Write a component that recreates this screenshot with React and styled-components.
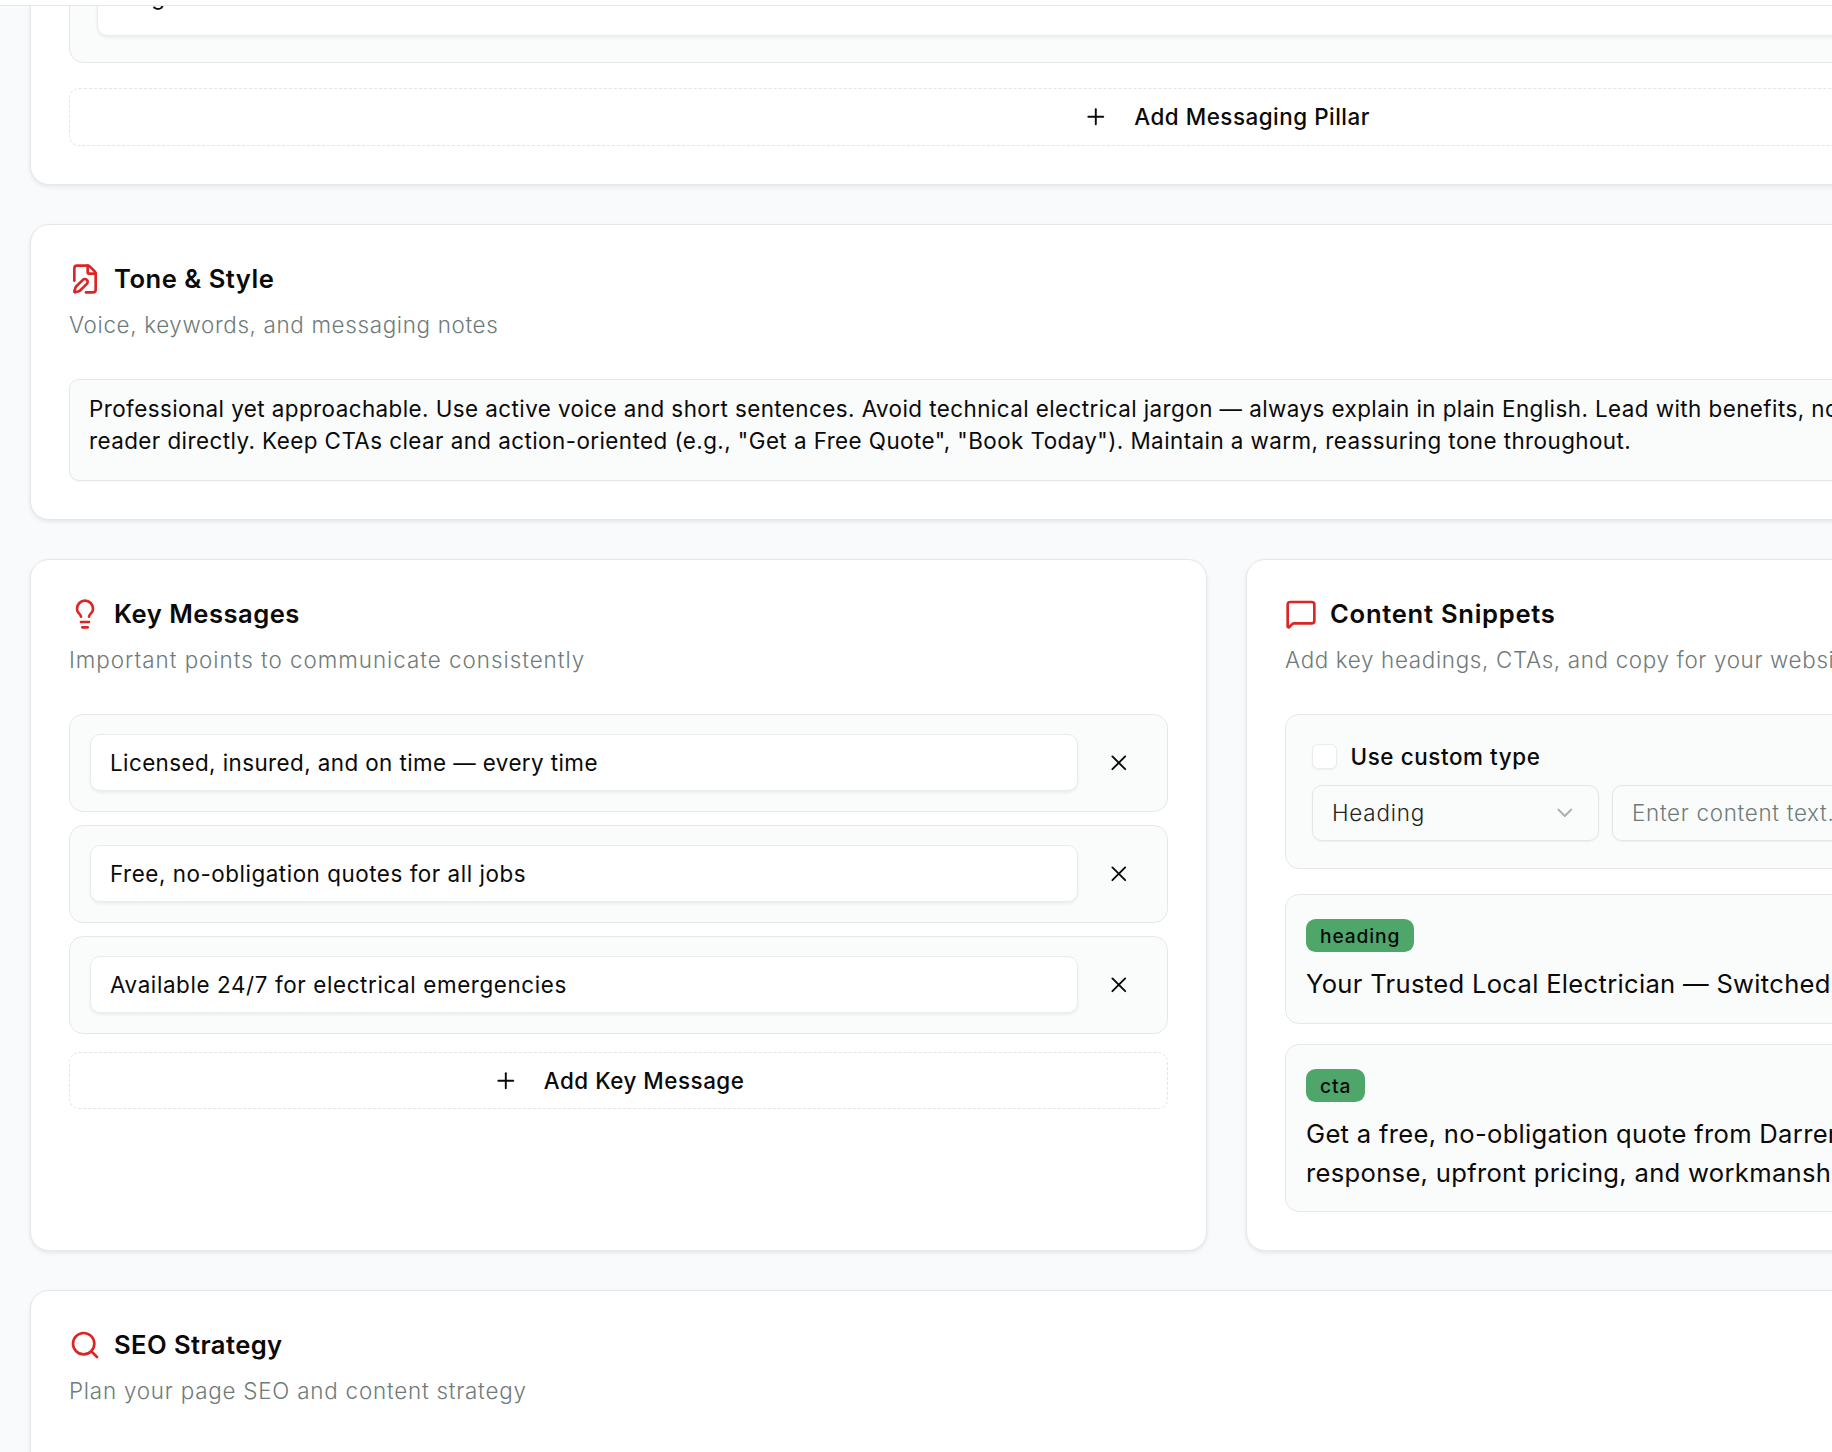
import React from 'react'
import styled, { createGlobalStyle } from 'styled-components'
import { FilePen, Lightbulb, MessageSquare, Search, Plus, X, ChevronDown } from 'lucide-react'

const Global = createGlobalStyle`
  html, body { margin: 0; padding: 0; }
  body { background: #f9fafb; font-family: Inter, "Noto Sans", sans-serif; color: #0a0a0a; }
`

const Page = styled.div`
  width: 1832px;
  height: 1452px;
  overflow: hidden;
  display: flex;
  flex-direction: column;
`
const TopBar = styled.div`
  flex: none;
  height: 5px;
  background: #fff;
  border-bottom: 1px solid #e5e7eb;
  position: relative;
  z-index: 2;
`
const Scroller = styled.div`
  width: 2393px;
  margin: -107px 0 0 30px;
  display: flex;
  flex-direction: column;
  gap: 39px;
`
const Card = styled.section`
  box-sizing: border-box;
  background: #fff;
  border: 1px solid #e5e7eb;
  border-radius: 19px;
  padding: 38px;
  box-shadow: 0 2px 4px rgba(0, 0, 0, 0.08);
`
const TwoCol = styled.div`
  display: grid;
  grid-template-columns: 1177px 1177px;
  gap: 39px;
`
const HeaderRow = styled.div`
  display: flex;
  align-items: center;
  gap: 13px;
  height: 32px;
  color: #dc2626;
`
const Title = styled.h2`
  margin: 0;
  font-size: 25.6px;
  font-weight: 600;
  line-height: 32px;
  letter-spacing: ${props => props.$ls}px;
  color: #0a0a0a;
`
const Sub = styled.p`
  margin: 14px 0 38px;
  font-size: 22.4px;
  line-height: 32px;
  font-weight: 300;
  letter-spacing: ${props => props.$ls}px;
  color: #6f7b79;
  white-space: nowrap;
`
const List = styled.div`
  display: flex;
  flex-direction: column;
  gap: 13px;
`
const Row = styled.div`
  box-sizing: border-box;
  height: 98px;
  display: flex;
  align-items: center;
  gap: 12px;
  padding: 0 19px 0 20px;
  background: #fafbfb;
  border: 1px solid #e5e7eb;
  border-radius: 14px;
`
const Field = styled.div`
  box-sizing: border-box;
  flex: 1;
  height: 57.6px;
  display: flex;
  align-items: center;
  padding: 0 19px;
  background: #fff;
  border: 1px solid #e9ebee;
  border-radius: 10px;
  box-shadow: 0 2px 3px rgba(0, 0, 0, 0.06);
  font-size: 22.4px;
  letter-spacing: ${props => props.$ls}px;
  white-space: nowrap;
`
const CloseButton = styled.button`
  flex: none;
  width: 57.6px;
  height: 57.6px;
  padding: 0;
  display: flex;
  align-items: center;
  justify-content: center;
  background: none;
  border: 0;
  color: #0a0a0a;
`
const AddButton = styled.button`
  box-sizing: border-box;
  width: 100%;
  height: 57.6px;
  margin-top: ${props => props.$top}px;
  display: flex;
  align-items: center;
  justify-content: center;
  gap: 25.6px;
  background: #fff;
  border: 1px dashed #e1e4e8;
  border-radius: 10px;
  font-family: inherit;
  font-size: 22.4px;
  font-weight: 500;
  letter-spacing: 0.52px;
  color: #0a0a0a;
`
const OldPillar = styled.div`
  box-sizing: border-box;
  padding: 27px 27px 26px;
  background: #fafbfb;
  border: 1px solid #e5e7eb;
  border-radius: 14px;
`
const PillarText = styled.div`
  box-sizing: border-box;
  height: 70px;
  padding: 14px 19px 0;
  background: #fff;
  border: 1px solid #e9ebee;
  border-radius: 10px;
  box-shadow: 0 2px 3px rgba(0, 0, 0, 0.06);
  font-size: 22.4px;
  letter-spacing: 0.42px;
  line-height: 32px;
`
const NotesBox = styled.div`
  box-sizing: border-box;
  height: 102px;
  padding: 13px 19px;
  background: #fafbfb;
  border: 1px solid #e5e7eb;
  border-radius: 10px;
  box-shadow: 0 1px 2px rgba(0, 0, 0, 0.04);
  font-size: 22.4px;
  letter-spacing: 0.44px;
  line-height: 32px;
  white-space: nowrap;
`
const CustomBox = styled.div`
  box-sizing: border-box;
  height: 155.5px;
  padding: 28px 26px 0;
  margin-bottom: 25px;
  background: #fafbfb;
  border: 1px solid #e5e7eb;
  border-radius: 14px;
`
const CheckRow = styled.label`
  display: flex;
  align-items: center;
  gap: 13.5px;
  font-size: 22.4px;
  font-weight: 500;
  letter-spacing: 0.6px;
`
const Check = styled.span`
  box-sizing: border-box;
  width: 25px;
  height: 25px;
  background: #fff;
  border: 1px solid #e9ebee;
  border-radius: 6px;
  box-shadow: 0 1px 2px rgba(0, 0, 0, 0.05);
`
const Controls = styled.div`
  display: flex;
  gap: 13px;
  margin-top: 15px;
`
const SelectBox = styled.div`
  box-sizing: border-box;
  width: 287px;
  height: 56px;
  display: flex;
  align-items: center;
  justify-content: space-between;
  padding: 0 20px 0 19px;
  border: 1px solid #e3e5e8;
  border-radius: 10px;
  box-shadow: 0 1px 2px rgba(0, 0, 0, 0.05);
  font-size: 22.4px;
  font-weight: 300;
  letter-spacing: 0.8px;
  color: #222;
  svg { color: #a8acae; }
`
const TextInput = styled(SelectBox)`
  flex: 1;
  letter-spacing: 0.7px;
  color: #6f7b79;
`
const Snippet = styled.div`
  box-sizing: border-box;
  padding: 24px 20px 19px;
  background: #fafbfb;
  border: 1px solid #e5e7eb;
  border-radius: 14px;
  & + & { margin-top: 20px; }
`
const Badge = styled.span`
  display: inline-flex;
  align-items: center;
  height: 33.4px;
  padding: 0 14px;
  background: #4fa66b;
  border-radius: 9.6px;
  font-size: 19.2px;
  font-weight: 500;
  letter-spacing: 0.9px;
  color: #0a0a0a;
`
const SnippetText = styled.div`
  margin-top: 13px;
  font-size: 25.6px;
  letter-spacing: 0.3px;
  line-height: 38.4px;
  white-space: nowrap;
`

const icon = { size: 32, strokeWidth: 2 }

const Heading = ({ Icon, children, ls = 0.5 }) => (
  <HeaderRow>
    <Icon {...icon} />
    <Title $ls={ls}>{children}</Title>
  </HeaderRow>
)

const messages = [
  { text: 'Licensed, insured, and on time — every time', ls: 0.42 },
  { text: 'Free, no-obligation quotes for all jobs', ls: 0.54 },
  { text: 'Available 24/7 for electrical emergencies', ls: 0.62 },
]

export default function App() {
  return (
    <Page>
      <Global />
      <TopBar />
      <Scroller>
        <Card>
          <OldPillar>
            <PillarText>Ring</PillarText>
          </OldPillar>
          <AddButton $top={25}>
            <Plus size={25.6} strokeWidth={1.8} />
            Add Messaging Pillar
          </AddButton>
        </Card>

        <Card>
          <Heading Icon={FilePen}>Tone &amp; Style</Heading>
          <Sub $ls={0.66}>Voice, keywords, and messaging notes</Sub>
          <NotesBox>
            Professional yet approachable. Use active voice and short sentences. Avoid technical electrical jargon — always explain in plain English. Lead with benefits, not features, and speak to the
            <br />
            reader directly. Keep CTAs clear and action-oriented (e.g., "Get a Free Quote", "Book Today"). Maintain a warm, reassuring tone throughout.
          </NotesBox>
        </Card>

        <TwoCol>
          <Card>
            <Heading Icon={Lightbulb}>Key Messages</Heading>
            <Sub $ls={0.98}>Important points to communicate consistently</Sub>
            <List>
              {messages.map(m => (
                <Row key={m.text}>
                  <Field $ls={m.ls}>{m.text}</Field>
                  <CloseButton><X size={25.6} strokeWidth={1.8} /></CloseButton>
                </Row>
              ))}
            </List>
            <AddButton $top={18}>
              <Plus size={25.6} strokeWidth={1.8} />
              Add Key Message
            </AddButton>
          </Card>

          <Card>
            <Heading Icon={MessageSquare} ls={0.72}>Content Snippets</Heading>
            <Sub $ls={0.66}>Add key headings, CTAs, and copy for your website</Sub>
            <CustomBox>
              <CheckRow><Check />Use custom type</CheckRow>
              <Controls>
                <SelectBox>Heading<ChevronDown size={25.6} strokeWidth={1.8} /></SelectBox>
                <TextInput>Enter content text...</TextInput>
              </Controls>
            </CustomBox>
            <Snippet>
              <Badge>heading</Badge>
              <SnippetText>Your Trusted Local Electrician — Switched On for Every Job</SnippetText>
            </Snippet>
            <Snippet>
              <Badge>cta</Badge>
              <SnippetText>
                Get a free, no-obligation quote from Darren today
                <br />
                response, upfront pricing, and workmanship you can trust
              </SnippetText>
            </Snippet>
          </Card>
        </TwoCol>

        <Card>
          <Heading Icon={Search} ls={0.42}>SEO Strategy</Heading>
          <Sub $ls={0.78}>Plan your page SEO and content strategy</Sub>
        </Card>
      </Scroller>
    </Page>
  )
}
